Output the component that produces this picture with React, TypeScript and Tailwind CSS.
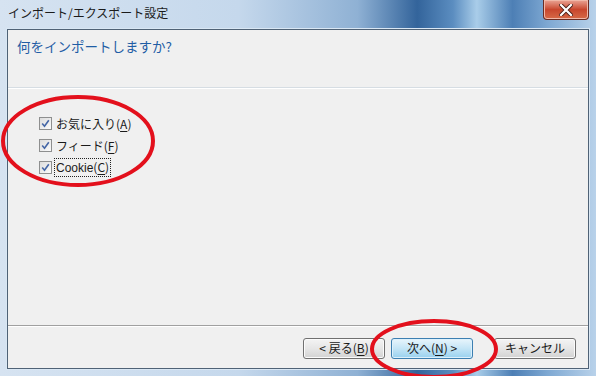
import React from "react"

const jp = "font-['Segoe_UI','Noto_Sans_CJK_JP',sans-serif]"

function CheckBox() {
  return (
    <span className="w-[13px] h-[13px] border border-[#8e8f8f] bg-gradient-to-br from-[#dcdcdc] to-[#fbfbfb] flex items-center justify-center shrink-0">
      <svg width="11" height="11" viewBox="0 0 11 11">
        <path d="M2.2 5.6 L4.5 8.3 L8.8 2.2" fill="none" stroke="#4466a6" strokeWidth="1.6" />
      </svg>
    </span>
  )
}

function Mn({ c }: { c: string }) {
  return (
    <>
      (<span className="underline underline-offset-2">{c}</span>)
    </>
  )
}

const Row: React.FC<{ children: React.ReactNode; focus?: boolean }> = ({ children, focus }) => (
  <div className="flex items-center gap-[3px] h-[22px]">
    <CheckBox />
    <span className={`px-[1px] leading-[15px] ${focus ? "outline outline-1 outline-dotted outline-[#222]" : ""}`}>
      {children}
    </span>
  </div>
)

const Btn: React.FC<{ children: React.ReactNode; primary?: boolean }> = ({ children, primary }) => (
  <div
    className={`w-[82px] h-[21px] rounded-[3px] border flex items-center justify-center text-[12px] text-[#1a1a1a] ${
      primary
        ? "border-[#3c7fb1] bg-gradient-to-b from-[#e8f5fc] via-[#c4e5f6] to-[#98d1ef] shadow-[inset_0_0_0_1px_#ddf0fb]"
        : "border-[#707070] bg-gradient-to-b from-[#f4f4f4] via-[#e6e6e6] to-[#d2d2d2] shadow-[inset_0_0_0_1px_#fbfbfb]"
    }`}
  >
    {children}
  </div>
)

export default function App() {
  return (
    <div
      className={`relative w-[596px] h-[376px] overflow-hidden flex flex-col ${jp} bg-[linear-gradient(90deg,#d6e3f1_0%,#c5d8ec_40%,#8fb1d4_60%,#33649b_70%,#5b8dc0_76%,#a9cde9_80%,#4d7fb5_86%,#7fa9d3_92%,#b9d2ea_100%)]`}
    >
      {/* title bar */}
      <div className="h-[29px] flex items-start shrink-0">
        <div className="pl-[8px] pt-[5px] text-[12px] text-[#1b1b1b] leading-[16px]">インポート/エクスポート設定</div>
        <div className="ml-auto mr-[7px] w-[46px] h-[20px] rounded-b-[4px] border border-t-0 border-[#6b2c22] bg-gradient-to-b from-[#e9a495] via-[#c8462d] to-[#d66a47] flex items-center justify-center shadow-[inset_0_0_0_1px_#f0b8a8]">
          <svg width="14" height="12" viewBox="0 0 14 12">
            <path d="M2 1 L12 11 M12 1 L2 11" stroke="#4a2018" strokeWidth="4" strokeLinecap="square" />
            <path d="M2 1 L12 11 M12 1 L2 11" stroke="#ffffff" strokeWidth="2.2" strokeLinecap="square" />
          </svg>
        </div>
      </div>

      {/* client area */}
      <div className="flex-1 mx-[7px] mb-[7px] border border-[#4f6276] bg-[#f0f0f0] flex flex-col shadow-[0_0_0_1px_#d9e7f4]">
        <div className="h-[58px] border-b border-[#d6dde3] shadow-[0_1px_0_#ffffff] pl-[9px] pt-[6px]">
          <div className="text-[13.5px] text-[#1f5da5] leading-[20px]">何をインポートしますか?</div>
        </div>

        <div className="flex-1 pt-[24px] pl-[31px] text-[12px] text-[#1a1a1a]">
          <Row>
            お気に入り<Mn c="A" />
          </Row>
          <Row>
            フィード<Mn c="F" />
          </Row>
          <Row focus>
            <span className="font-['Liberation_Sans','Noto_Sans_CJK_JP',sans-serif]">Cookie</span>
            <Mn c="C" />
          </Row>
        </div>

        <div className="h-[43px] border-t border-[#a0a0a0] shadow-[inset_0_1px_0_#ffffff] flex items-center justify-end pr-[12px] pt-[2px]">
          <Btn>
            &lt; 戻る<Mn c="B" />
          </Btn>
          <div className="w-[6px]" />
          <Btn primary>
            次へ<Mn c="N" /> &gt;
          </Btn>
          <div className="w-[21px]" />
          <Btn>キャンセル</Btn>
        </div>
      </div>

      {/* red annotation ellipses */}
      <svg className="absolute inset-0 pointer-events-none" width="596" height="376">
        <ellipse cx="78" cy="141" rx="75" ry="44" fill="none" stroke="#e3101c" strokeWidth="4" />
        <ellipse cx="434" cy="349" rx="62" ry="28" fill="none" stroke="#e3101c" strokeWidth="4" />
      </svg>
    </div>
  )
}
